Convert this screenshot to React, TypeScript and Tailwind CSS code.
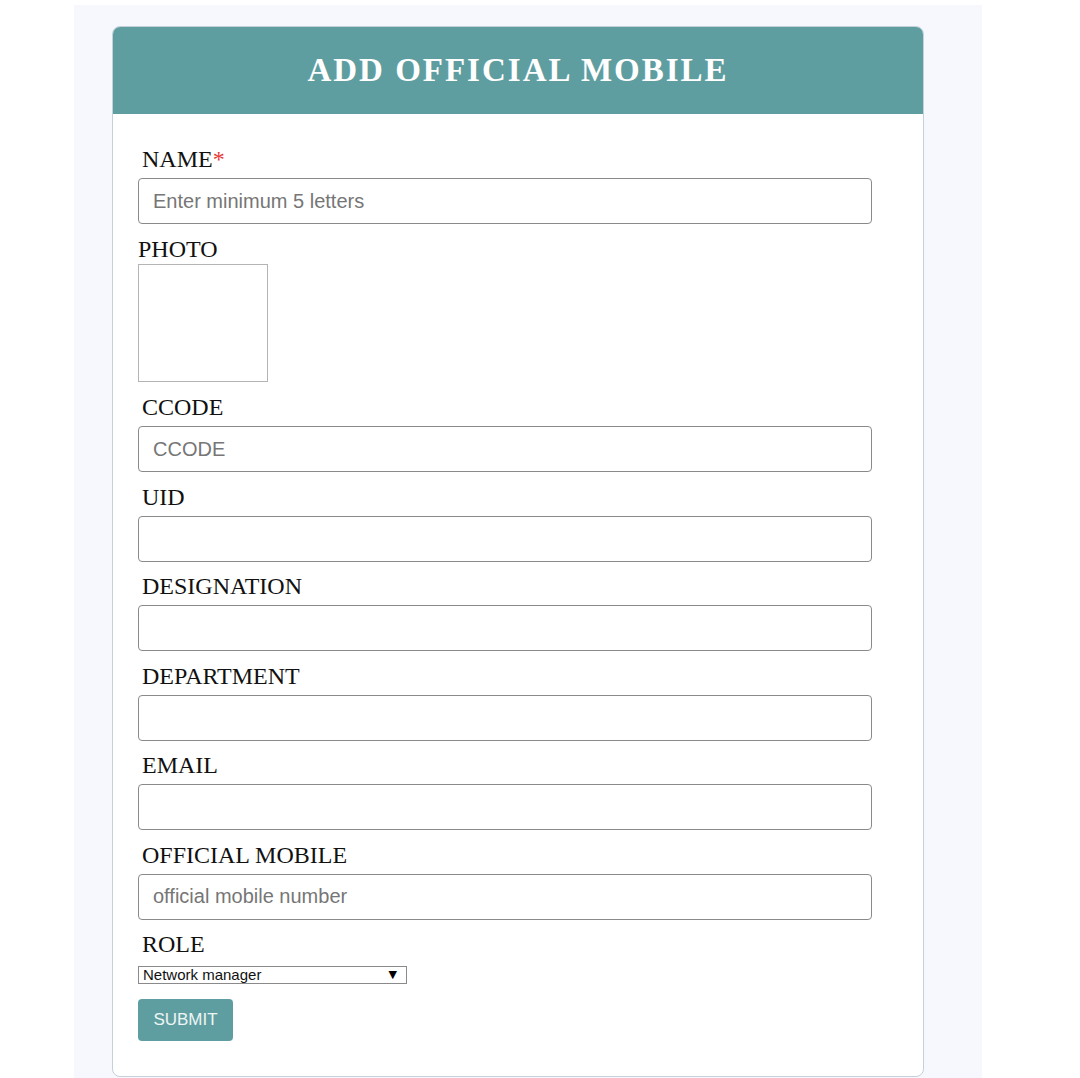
const fields = [
  { label: 'CCODE', placeholder: 'CCODE' },
  { label: 'UID', placeholder: '' },
  { label: 'DESIGNATION', placeholder: '' },
  { label: 'DEPARTMENT', placeholder: '' },
  { label: 'EMAIL', placeholder: '' },
  { label: 'OFFICIAL MOBILE', placeholder: 'official mobile number' },
];

function Field({ label, placeholder }: { label: string; placeholder: string }) {
  return (
    <div className="mb-[11.5px]">
      <label className="block h-[26px] pl-1 text-[24px] leading-[26px] text-[#111]">{label}</label>
      <input
        type="text"
        placeholder={placeholder}
        className="mt-[6px] block h-[46px] w-[734px] rounded-[4px] border border-[#8a8a8a] px-[14px] font-['Liberation_Sans',Arial,sans-serif] text-[20px] text-[#333] outline-none placeholder:text-[#767676]"
      />
    </div>
  );
}

export default function App() {
  return (
    <div className="min-h-screen bg-white pt-[5px] font-['Liberation_Serif','Times_New_Roman',serif]">
      <div className="ml-[74px] w-[908px] bg-[#f7f8fd] pt-[21px] pb-[1px]">
        <div className="ml-[38px] w-[812px] overflow-hidden rounded-[8px] border border-[#c6d0db] bg-white">
          <div className="flex h-[87px] items-center justify-center bg-[#5f9ea0]">
            <h1 className="text-[33px] font-bold tracking-[2px] text-white">ADD OFFICIAL MOBILE</h1>
          </div>

          <div className="px-[25px] pt-[32px] pb-[35px]">
            <div className="mb-[12px]">
              <label className="block h-[26px] pl-1 text-[24px] leading-[26px] text-[#111]">
                NAME<span className="text-[#e53935]">*</span>
              </label>
              <input
                type="text"
                placeholder="Enter minimum 5 letters"
                className="mt-[6px] block h-[46px] w-[734px] rounded-[4px] border border-[#8a8a8a] px-[14px] font-['Liberation_Sans',Arial,sans-serif] text-[20px] text-[#333] outline-none placeholder:text-[#767676]"
              />
            </div>

            <label className="block h-[26px] text-[24px] leading-[26px] text-[#111]">PHOTO</label>
            <div className="mt-[2px] h-[118px] w-[130px] border border-[#b4b4b4]" />

            <div className="mt-[12px]">
              {fields.map((f) => (
                <Field key={f.label} label={f.label} placeholder={f.placeholder} />
              ))}
            </div>

            <label className="mt-[2px] block h-[26px] pl-1 text-[24px] leading-[26px] text-[#111]">ROLE</label>
            <div className="relative mt-[9px] flex h-[18px] w-[269px] items-center border border-[#8a8a8a] bg-white pl-[4px]">
              <span className="font-['Liberation_Sans',Arial,sans-serif] text-[15px] leading-[16px] text-[#111]">Network manager</span>
              <span className="absolute right-[9px] top-[1px] font-['DejaVu_Sans',sans-serif] text-[11px] leading-[14px] text-black">▼</span>
            </div>

            <button className="mt-[15px] h-[42px] w-[95px] rounded-[4px] bg-[#5f9ea0] font-['Liberation_Sans',Arial,sans-serif] text-[17px] text-[#eef5f5]">
              SUBMIT
            </button>
          </div>
        </div>
      </div>
    </div>
  );
}
